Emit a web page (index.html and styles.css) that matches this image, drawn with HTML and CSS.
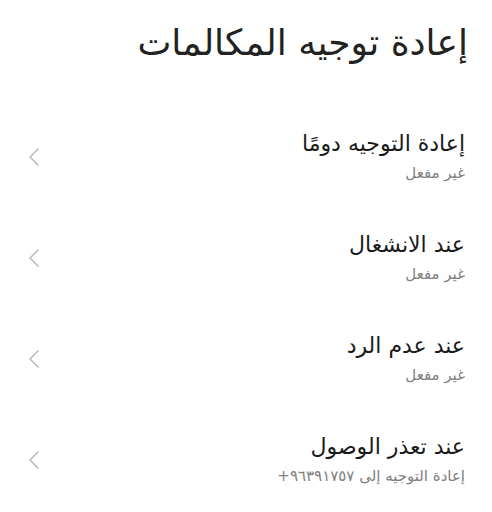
FILE: index.html
```html
<!DOCTYPE html>
<html lang="ar" dir="rtl">
<head>
    <meta charset="UTF-8">
    <meta name="viewport" content="width=device-width, initial-scale=1.0">
    <title>إعادة توجيه المكالمات</title>
    <link rel="stylesheet" href="styles.css">
</head>
<body>
    <div class="page">
        <h1 class="page-title">إعادة توجيه المكالمات</h1>

        <ul class="settings">
            <li class="row">
                <div class="row-text">
                    <div class="row-title">إعادة التوجيه دومًا</div>
                    <div class="row-sub">غير مفعل</div>
                </div>
                <svg class="chevron" viewBox="0 0 12 20" width="12" height="20"><path d="M10.5 1.5 L2 10 L10.5 18.5" /></svg>
            </li>
            <li class="row">
                <div class="row-text">
                    <div class="row-title">عند الانشغال</div>
                    <div class="row-sub">غير مفعل</div>
                </div>
                <svg class="chevron" viewBox="0 0 12 20" width="12" height="20"><path d="M10.5 1.5 L2 10 L10.5 18.5" /></svg>
            </li>
            <li class="row">
                <div class="row-text">
                    <div class="row-title">عند عدم الرد</div>
                    <div class="row-sub">غير مفعل</div>
                </div>
                <svg class="chevron" viewBox="0 0 12 20" width="12" height="20"><path d="M10.5 1.5 L2 10 L10.5 18.5" /></svg>
            </li>
            <li class="row">
                <div class="row-text">
                    <div class="row-title">عند تعذر الوصول</div>
                    <div class="row-sub">إعادة التوجيه إلى <span dir="ltr">+٩٦٣٩١٧٥٧</span></div>
                </div>
                <svg class="chevron" viewBox="0 0 12 20" width="12" height="20"><path d="M10.5 1.5 L2 10 L10.5 18.5" /></svg>
            </li>
        </ul>
    </div>
</body>
</html>
```

FILE: styles.css
```css
/* General Styles */
body {
    margin: 0;
    padding: 0;
    background: #ffffff;
    font-family: "DejaVu Sans", sans-serif;
    color: #1a1a1a;
}

.page {
    padding: 0 27px 0 28px;
}

.page-title {
    margin: 0 -3px 0 0;
    height: 106px;
    padding-top: 20px;
    box-sizing: border-box;
    font-size: 36px;
    font-weight: normal;
    line-height: 46px;
    color: #222;
}

.settings {
    list-style: none;
    margin: 0;
    padding: 0;
}

.row {
    display: flex;
    align-items: center;
    justify-content: space-between;
    height: 101px;
}

.row-title {
    font-size: 22px;
    line-height: 32px;
    color: #1a1a1a;
}

.row-sub {
    font-size: 15px;
    line-height: 26px;
    color: #808080;
}

.chevron {
    fill: none;
    stroke: #b4b4b4;
    stroke-width: 1.4;
}
```
